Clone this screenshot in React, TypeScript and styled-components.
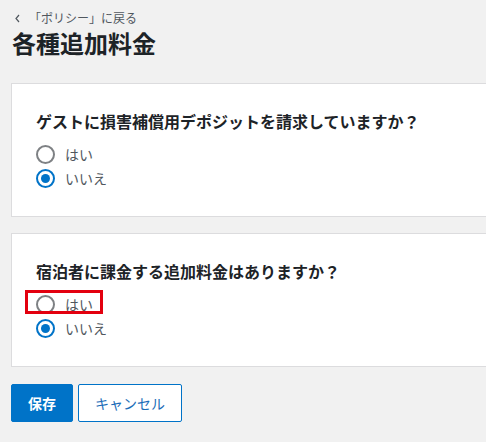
import styled, { createGlobalStyle } from "styled-components";

const GlobalStyle = createGlobalStyle`
  html, body {
    margin: 0;
    padding: 0;
    background: #f1f1f1;
    overflow: hidden;
  }
  body {
    font-family: "Noto Sans CJK JP", "Noto Sans", "Liberation Sans", sans-serif;
    color: #1d2327;
  }
`;

const Page = styled.div`
  min-width: 540px;
  padding: 10px 0 20px 11px;
`;

const BackLink = styled.a`
  display: flex;
  align-items: center;
  gap: 8px;
  height: 16px;
  padding-left: 3px;
  font-size: 12px;
  line-height: 16px;
  color: #50575e;
  text-decoration: none;
`;

const Title = styled.h1`
  margin: 3px 0 26px 1px;
  font-size: 24px;
  line-height: 28px;
  font-weight: 700;
  color: #1d2327;
`;

const Card = styled.section`
  background: #ffffff;
  border: 1px solid #dcdcde;
  padding: 26px 24px 26px 24px;
  margin-bottom: 16px;
`;

const Question = styled.h2`
  margin: 0 0 10px;
  font-size: 16px;
  line-height: 22px;
  font-weight: 700;
  color: #1d2327;
`;

const Options = styled.div`
  display: flex;
  flex-direction: column;
  align-items: flex-start;
`;

const Option = styled.label<{ $highlight?: boolean }>`
  position: relative;
  display: inline-flex;
  align-items: center;
  gap: 10px;
  height: 24px;
  font-size: 14px;
  color: #50575e;
  cursor: pointer;

  ${(p) =>
    p.$highlight &&
    `
    &::after {
      content: "";
      position: absolute;
      top: -2px;
      bottom: 2px;
      left: -11px;
      right: -10px;
      border: 3px solid #e3000f;
      pointer-events: none;
    }
  `}
`;

const Radio = styled.span<{ $checked?: boolean }>`
  box-sizing: border-box;
  width: 19px;
  height: 19px;
  border-radius: 50%;
  border: 2px solid ${(p) => (p.$checked ? "#0073c8" : "#7e8184")};
  display: flex;
  align-items: center;
  justify-content: center;

  &::before {
    content: "";
    width: 9px;
    height: 9px;
    border-radius: 50%;
    background: ${(p) => (p.$checked ? "#0073c8" : "transparent")};
  }
`;

const Actions = styled.div`
  display: flex;
  gap: 5px;
  margin-top: 17px;
`;

const Button = styled.button<{ $primary?: boolean }>`
  box-sizing: border-box;
  height: 38px;
  padding: 0 16px;
  border-radius: 2px;
  font-family: inherit;
  font-size: 14px;
  font-weight: ${(p) => (p.$primary ? 700 : 400)};
  border: 1px solid #0073c8;
  background: ${(p) => (p.$primary ? "#0073c8" : "#ffffff")};
  color: ${(p) => (p.$primary ? "#ffffff" : "#1b6db8")};
  cursor: pointer;
`;

type Q = { text: string; answer: "yes" | "no"; highlightYes?: boolean };

const questions: Q[] = [
  { text: "ゲストに損害補償用デポジットを請求していますか？", answer: "no" },
  { text: "宿泊者に課金する追加料金はありますか？", answer: "no", highlightYes: true },
];

export default function App() {
  return (
    <>
      <GlobalStyle />
      <Page>
        <BackLink href="#">
          <svg width="7" height="9" viewBox="0 0 7 9">
            <path d="M5 1 L2 4.5 L5 8" fill="none" stroke="#50575e" strokeWidth="1.2" />
          </svg>
          「ポリシー」に戻る
        </BackLink>
        <Title>各種追加料金</Title>
        {questions.map((q) => (
          <Card key={q.text}>
            <Question>{q.text}</Question>
            <Options>
              <Option $highlight={q.highlightYes}>
                <Radio $checked={q.answer === "yes"} />
                はい
              </Option>
              <Option>
                <Radio $checked={q.answer === "no"} />
                いいえ
              </Option>
            </Options>
          </Card>
        ))}
        <Actions>
          <Button $primary style={{ width: 62 }}>保存</Button>
          <Button style={{ width: 104 }}>キャンセル</Button>
        </Actions>
      </Page>
    </>
  );
}
